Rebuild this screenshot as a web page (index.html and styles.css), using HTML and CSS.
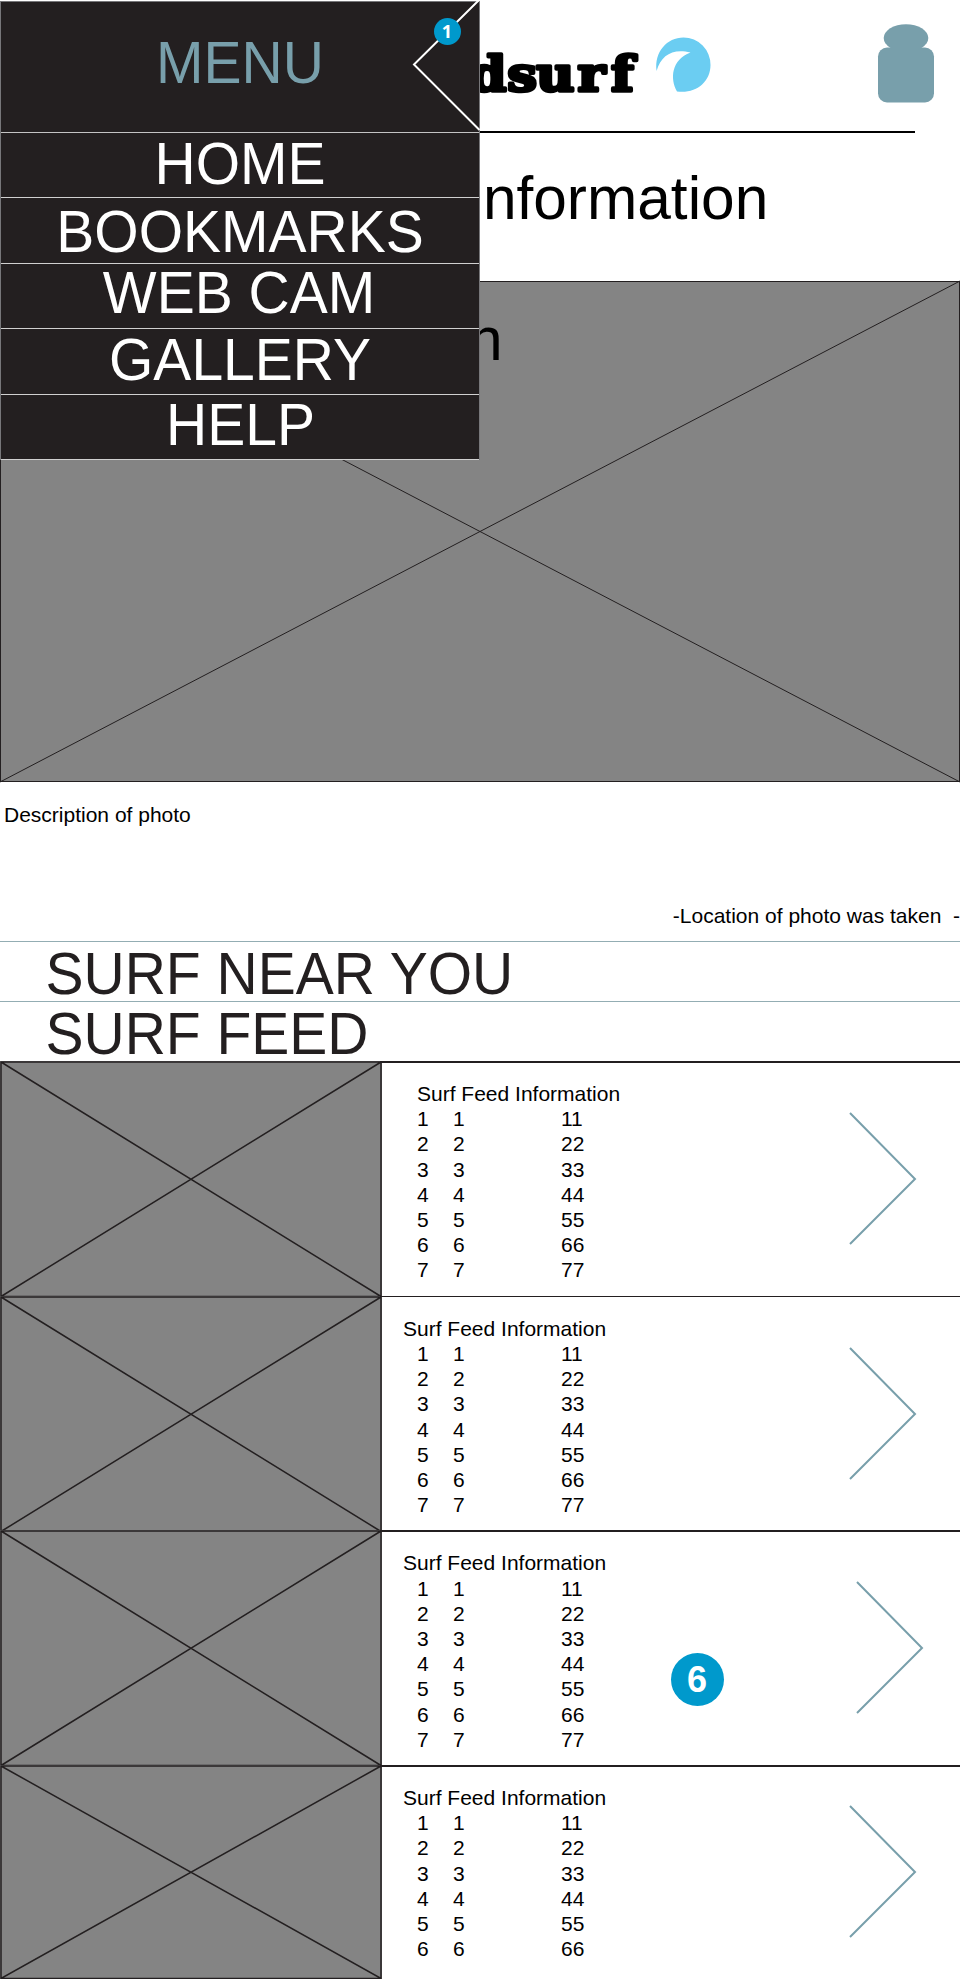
FILE: index.html
```html
<!DOCTYPE html>
<html lang="en">
<head>
<meta charset="utf-8">
<title>Surf feed</title>
<link rel="stylesheet" href="styles.css">
</head>
<body>
<div class="page">
  <nav class="menu">
    <div class="menu-head"><span class="caps">MENU</span>
      <svg class="menu-arrow" width="68" height="132" viewBox="0 0 68 132"><path d="M67 0 2 64.500 67.500 130"/></svg>
      <span class="badge badge-small">1</span>
    </div>
    <a class="menu-item home"><span class="caps">HOME</span></a>
    <a class="menu-item bookmarks"><span class="caps">BOOKMARKS</span></a>
    <a class="menu-item webcam"><span class="caps">WEB CAM</span></a>
    <a class="menu-item gallery"><span class="caps">GALLERY</span></a>
    <a class="menu-item help"><span class="caps">HELP</span></a>
  </nav>

  <header class="header">
    <svg class="logo" width="170" height="60" viewBox="0 0 170 60"><text transform="scale(1.08 1)" x="-.5 34.500 61 99.500 130.500" y="49">dsurf</text></svg>
    <svg class="wave" width="55" height="56" viewBox="0 0 55 56"><path d="M.6 34C-2 15 11 .5 27.500.5A27 27.300 0 0 1 54.500 28C54.500 45 40 57 21 54.500 14 42 15 23 34.500 15.500 17 11 5 18 .6 34Z"/></svg>
    <svg class="jar" width="56" height="79" viewBox="0 0 56 79"><ellipse cx="28" cy="14" rx="22.300" ry="13.700"/><rect y="23.500" width="56" height="55" rx="9"/></svg>
  </header>
  <h1 class="title">information</h1>

  <section class="hero">
    <svg class="cross" viewBox="0 0 960 501" preserveAspectRatio="none"><path d="M0 0 960 501M960 0 0 501"/></svg>
    <span class="hero-text">n</span>
  </section>
  <p class="description">Description of photo</p>
  <p class="location">-Location of photo was taken&nbsp; -</p>

  <h2 class="section"><span class="caps">SURF NEAR YOU</span></h2>
  <h2 class="section"><span class="caps">SURF FEED</span></h2>

  <article class="feed first">
    <svg class="thumb" viewBox="0 0 382 235" preserveAspectRatio="none"><path d="M1 1H381V235.500H1ZL381 235.500M381 1 1 235.500"/></svg>
    <div class="info"><h3>Surf Feed Information</h3>
      <div class="grid"><b>1</b><b>1</b><b>11</b><b>2</b><b>2</b><b>22</b><b>3</b><b>3</b><b>33</b><b>4</b><b>4</b><b>44</b><b>5</b><b>5</b><b>55</b><b>6</b><b>6</b><b>66</b><b>7</b><b>7</b><b>77</b></div></div>
    <svg class="chevron" width="68" height="134" viewBox="0 0 68 134"><path d="M1 1 66 67 1 132"/></svg>
  </article>
  <article class="feed">
    <svg class="thumb" viewBox="0 0 382 235" preserveAspectRatio="none"><path d="M1 1H381V235.500H1ZL381 235.500M381 1 1 235.500"/></svg>
    <div class="info"><h3>Surf Feed Information</h3>
      <div class="grid"><b>1</b><b>1</b><b>11</b><b>2</b><b>2</b><b>22</b><b>3</b><b>3</b><b>33</b><b>4</b><b>4</b><b>44</b><b>5</b><b>5</b><b>55</b><b>6</b><b>6</b><b>66</b><b>7</b><b>7</b><b>77</b></div></div>
    <svg class="chevron" width="68" height="134" viewBox="0 0 68 134"><path d="M1 1 66 67 1 132"/></svg>
  </article>
  <article class="feed third">
    <svg class="thumb" viewBox="0 0 382 235" preserveAspectRatio="none"><path d="M1 1H381V235.500H1ZL381 235.500M381 1 1 235.500"/></svg>
    <div class="info"><h3>Surf Feed Information</h3>
      <div class="grid"><b>1</b><b>1</b><b>11</b><b>2</b><b>2</b><b>22</b><b>3</b><b>3</b><b>33</b><b>4</b><b>4</b><b>44</b><b>5</b><b>5</b><b>55</b><b>6</b><b>6</b><b>66</b><b>7</b><b>7</b><b>77</b></div></div>
    <span class="badge badge-large">6</span>
    <svg class="chevron" width="68" height="134" viewBox="0 0 68 134"><path d="M1 1 66 67 1 132"/></svg>
  </article>
  <article class="feed last">
    <svg class="thumb" viewBox="0 0 382 214" preserveAspectRatio="none"><path d="M1 1H381V213.500H1ZL381 213.500M381 1 1 213.500"/></svg>
    <div class="info"><h3>Surf Feed Information</h3>
      <div class="grid"><b>1</b><b>1</b><b>11</b><b>2</b><b>2</b><b>22</b><b>3</b><b>3</b><b>33</b><b>4</b><b>4</b><b>44</b><b>5</b><b>5</b><b>55</b><b>6</b><b>6</b><b>66</b></div></div>
    <svg class="chevron" width="68" height="134" viewBox="0 0 68 134"><path d="M1 1 66 67 1 132"/></svg>
  </article>
</div>
</body>
</html>
```

FILE: styles.css
```css
* { box-sizing: border-box; }
body { margin: 0; background: #fff; font-family: "Liberation Sans", Arial, sans-serif; color: #000; }
h1, h2, h3, p { margin: 0; font-weight: 400; }
svg { display: block; flex: none; overflow: visible; }
.page { position: relative; width: 960px; height: 1979px; overflow: hidden; }

/* Tall capitals, stretched from the baseline */
.caps { display: block; font-size: 57px; line-height: 56px; white-space: nowrap; transform: scaleY(1.04); transform-origin: 0 47.800px; }

/* Slide-out menu over the page */
.menu { position: absolute; z-index: 2; left: 0; top: 1px; width: 480px; background: #231f20; color: #fff; text-align: center; border: 1px solid #77777a; border-bottom: 0; }
.menu-head { position: relative; height: 131px; padding-top: 33.200px; color: #789fab; border-bottom: 1px solid #c4c4c4; }
.menu-item { display: block; height: 65.400px; border-bottom: 1px solid #d0d0d0; }
.home { padding-top: 3px; }
.bookmarks { padding-top: 6px; }
.webcam { padding: 1.500px 2px 0 0; }
.gallery { padding-top: 3px; }
.help { padding: 2.500px 0 0 1px; }
.menu-arrow { position: absolute; right: -1px; top: -2px; }
.menu-arrow path { fill: none; stroke: #fff; stroke-width: 2; }

.badge { display: flex; align-items: center; justify-content: center; border-radius: 50%; background: #09c; color: #fff; font-weight: 700; }
.badge-small { position: absolute; left: 432.500px; top: 16px; width: 27px; height: 27px; font: 700 18px/27px "Open Sans", sans-serif; }
.badge-large { position: absolute; left: 670.500px; top: 123px; width: 53px; height: 53px; font-size: 36px; }

.header { display: flex; align-items: flex-start; width: 915px; height: 133px; padding-left: 470px; border-bottom: 2px solid #000; }
.logo { margin-top: 42px; }
.logo text { font: 700 49px "DejaVu Serif", serif; stroke: #000; stroke-width: 3.500; stroke-linejoin: round; }
.wave { margin: 36.500px 0 0 15.500px; fill: #6bcdf2; }
.jar { margin: 24px -19px 0 auto; fill: #789fab; }
.title { height: 148px; padding: 34.500px 0 0 469.500px; font-size: 60.400px; line-height: 60px; }

.hero { position: relative; height: 501px; background: #848484; border: 1px solid #231f20; }
.cross { position: absolute; inset: -1px; width: 960px; height: 501px; }
.cross path { fill: none; stroke: #231f20; stroke-width: 1; }
.hero-text { display: block; padding: 27px 0 0 468px; font-size: 60.400px; line-height: 60px; }

.description { height: 102px; padding: 21px 0 0 4px; font-size: 21px; line-height: 24px; }
.location { height: 57px; padding-top: 20px; text-align: right; font-size: 21px; line-height: 24px; white-space: nowrap; }
.section { height: 60px; padding: 3.500px 0 0 45.500px; border-top: 1px solid #93adb3; color: #231f20; }

.feed { position: relative; display: flex; height: 234.700px; }
.feed::after { content: ""; position: absolute; left: 380px; right: 0; top: 0; height: 1.500px; background: #231f20; }
.thumb { width: 382px; height: 235px; background: #848484; }
.thumb path { fill: none; stroke: #231f20; stroke-width: 1.500; }
.info { width: 260px; padding: 20px 0 0 21px; font-size: 21px; line-height: 25.200px; }
.info h3 { font-size: 21px; line-height: 25.200px; white-space: nowrap; }
.first .info h3 { padding-left: 14px; }
.grid { display: grid; grid-template-columns: 36px 108px 50px; padding-left: 14px; }
.grid b { font-weight: 400; }
.chevron { margin: 51px 43px 0 auto; }
.chevron path { fill: none; stroke: #789fab; stroke-width: 2; }
.third .chevron { margin-right: 36px; }
.last { height: 214px; }
.last .thumb { height: 214px; }
.last .chevron { margin-top: 40px; }
```
